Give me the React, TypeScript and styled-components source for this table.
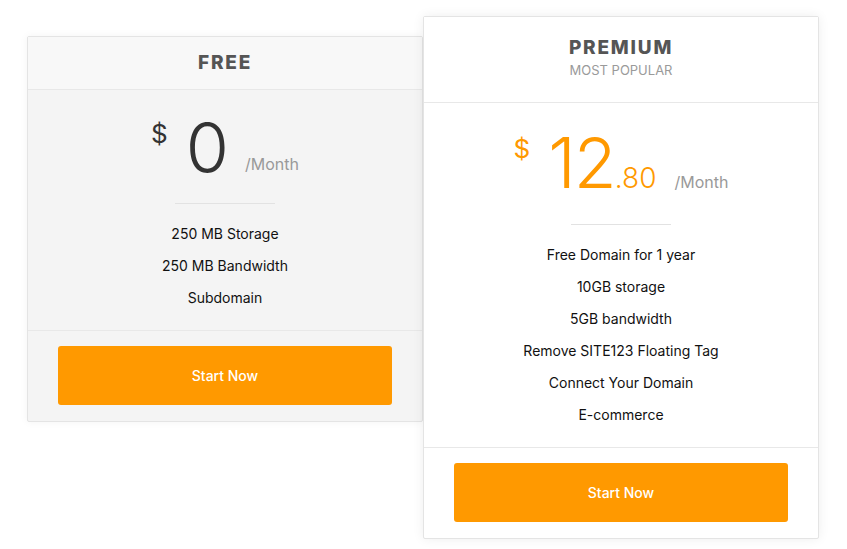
import React from "react";
import styled, { createGlobalStyle } from "styled-components";

const Global = createGlobalStyle`
  html, body { margin: 0; padding: 0; background: #ffffff; }
  body { font-family: Inter, "Noto Sans", "Liberation Sans", sans-serif; }
  * { box-sizing: border-box; }
`;

const ORANGE = "#ff9900";

const Page = styled.div`
  display: flex;
  align-items: flex-start;
  padding: 16px 0 0 27px;
  width: 847px;
  height: 549px;
`;

const Card = styled.div<{ $featured?: boolean }>`
  position: relative;
  width: 396px;
  border: 1px solid #e4e4e4;
  border-radius: 2px;
  background: ${(p) => (p.$featured ? "#ffffff" : "#f4f4f4")};
  margin-top: ${(p) => (p.$featured ? "0" : "20px")};
  z-index: ${(p) => (p.$featured ? 2 : 1)};
  box-shadow: ${(p) =>
    p.$featured ? "0 0 12px rgba(0,0,0,0.07)" : "0 0 8px rgba(0,0,0,0.05)"};
  display: flex;
  flex-direction: column;
`;

const Header = styled.div<{ $featured?: boolean }>`
  display: flex;
  flex-direction: column;
  align-items: center;
  justify-content: center;
  height: ${(p) => (p.$featured ? "86px" : "53px")};
  padding-bottom: ${(p) => (p.$featured ? "4px" : "0")};
  border-bottom: 1px solid #e8e8e8;
  background: ${(p) => (p.$featured ? "#ffffff" : "#f8f8f8")};
`;

const Title = styled.div`
  font-size: 19px;
  font-weight: 800;
  letter-spacing: 1.8px;
  color: #555555;
  line-height: 22px;
`;

const Subtitle = styled.div`
  font-size: 13px;
  color: #9a9a9a;
  line-height: 16px;
  margin-top: 3px;
`;

const Body = styled.div<{ $top: number; $gap: number }>`
  display: flex;
  flex-direction: column;
  align-items: center;
  padding-top: ${(p) => p.$top}px;
  padding-bottom: 16px;
  border-bottom: 1px solid #e8e8e8;

  & > hr {
    margin-top: ${(p) => p.$gap}px;
  }
`;

const PriceRow = styled.div<{ $featured?: boolean }>`
  display: flex;
  align-items: baseline;
  color: ${(p) => (p.$featured ? ORANGE : "#333333")};
`;

const Currency = styled.span`
  align-self: flex-start;
  font-size: 26px;
  line-height: 26px;
  margin-top: 8px;
  margin-right: 18px;
`;

const Amount = styled.span`
  font-size: 70px;
  font-weight: 300;
  line-height: 70px;
  letter-spacing: -2px;
`;

const Cents = styled.span`
  font-size: 28px;
  font-weight: 300;
  line-height: 28px;
`;

const Period = styled.span<{ $raise: number }>`
  font-size: 16px;
  color: #999999;
  margin-left: 18px;
  position: relative;
  top: ${(p) => -p.$raise}px;
`;

const Divider = styled.hr`
  width: 100px;
  height: 1px;
  border: 0;
  background: #e2e2e2;
  margin-bottom: 14px;
  margin-left: 0;
  margin-right: 0;
`;

const Features = styled.ul`
  list-style: none;
  margin: 0;
  padding: 0;
  text-align: center;
`;

const Feature = styled.li`
  font-size: 14px;
  line-height: 32px;
  color: #111111;
`;

const Footer = styled.div`
  padding: 15px 30px 16px;
`;

const Button = styled.button`
  display: block;
  width: 100%;
  height: 59px;
  border: 0;
  border-radius: 3px;
  background: ${ORANGE};
  color: #ffffff;
  font-family: inherit;
  font-size: 14px;
  font-weight: 500;
  cursor: pointer;
`;

type Plan = {
  title: string;
  subtitle?: string;
  amount: string;
  cents?: string;
  features: string[];
  featured?: boolean;
  top: number;
  gap: number;
  raise: number;
};

const plans: Plan[] = [
  {
    title: "FREE",
    amount: "0",
    features: ["250 MB Storage", "250 MB Bandwidth", "Subdomain"],
    top: 23,
    gap: 20,
    raise: 3,
  },
  {
    title: "PREMIUM",
    subtitle: "MOST POPULAR",
    amount: "12",
    cents: ".80",
    featured: true,
    features: [
      "Free Domain for 1 year",
      "10GB storage",
      "5GB bandwidth",
      "Remove SITE123 Floating Tag",
      "Connect Your Domain",
      "E-commerce",
    ],
    top: 25,
    gap: 26,
    raise: 0,
  },
];

export default function App() {
  return (
    <>
      <Global />
      <Page>
        {plans.map((p) => (
          <Card key={p.title} $featured={p.featured}>
            <Header $featured={p.featured}>
              <Title>{p.title}</Title>
              {p.subtitle && <Subtitle>{p.subtitle}</Subtitle>}
            </Header>
            <Body $top={p.top} $gap={p.gap}>
              <PriceRow $featured={p.featured}>
                <Currency>$</Currency>
                <Amount>{p.amount}</Amount>
                {p.cents && <Cents>{p.cents}</Cents>}
                <Period $raise={p.raise}>/Month</Period>
              </PriceRow>
              <Divider />
              <Features>
                {p.features.map((f) => (
                  <Feature key={f}>{f}</Feature>
                ))}
              </Features>
            </Body>
            <Footer>
              <Button>Start Now</Button>
            </Footer>
          </Card>
        ))}
      </Page>
    </>
  );
}
